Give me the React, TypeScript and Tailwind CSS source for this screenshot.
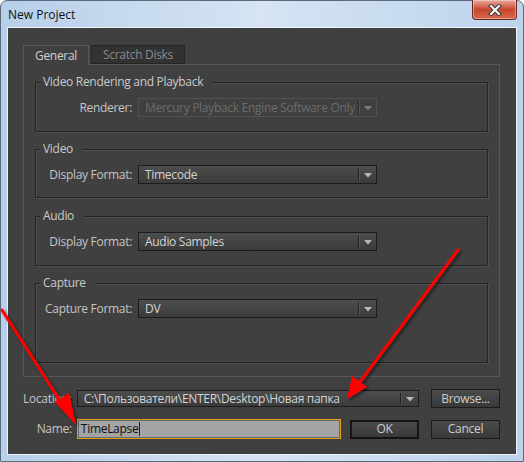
import React from "react";

function Arrow() {
  return (
    <svg width="10" height="6" viewBox="0 0 10 6">
      <path d="M1 1h8L5 5.5z" fill="#b8b8b8" />
    </svg>
  );
}

function Dropdown({ text, disabled }: { text: string; disabled?: boolean }) {
  if (disabled) {
    return (
      <div className="flex h-[19px] w-[239px] border border-[#515151] bg-[#404040]">
        <div className="flex-1 truncate pl-[6px] text-[12px] leading-[17px] text-[#6c6c6c]">{text}</div>
        <div className="my-[2px] w-px bg-[#2c2c2c]" />
        <div className="my-[2px] w-px bg-[#565656]" />
        <div className="flex w-[16px] items-center justify-center opacity-50">
          <Arrow />
        </div>
      </div>
    );
  }
  return (
    <div className="flex h-[19px] w-[239px] border border-[#1c1c1c] bg-gradient-to-b from-[#4d4d4d] to-[#3b3b3b]">
      <div className="flex-1 truncate pl-[6px] text-[12px] leading-[17px] text-[#d4d4d4]">{text}</div>
      <div className="my-[2px] w-px bg-[#222]" />
      <div className="my-[2px] w-px bg-[#555]" />
      <div className="flex w-[16px] items-center justify-center">
        <Arrow />
      </div>
    </div>
  );
}

function Group({
  title,
  label,
  value,
  disabled,
  className,
}: {
  title: string;
  label: string;
  value: string;
  disabled?: boolean;
  className: string;
}) {
  return (
    <div className={`flex flex-col border border-[#242424] shadow-[1px_1px_0_#4f4f4f,inset_1px_1px_0_#4f4f4f] ${className}`}>
      <div className="-mt-[9px] ml-[4px] w-fit bg-[#404040] pl-[3px] pr-[9px] text-[12px] leading-[16px] text-[#cacaca]">
        {title}
      </div>
      <div className="mt-[8px] flex items-center">
        <div className="w-[96px] text-right text-[12px] leading-[19px] text-[#c4c4c4]">{label}</div>
        <div className="ml-[6px]">
          <Dropdown text={value} disabled={disabled} />
        </div>
      </div>
    </div>
  );
}

function Button({ text, primary }: { text: string; primary?: boolean }) {
  return (
    <div
      className={`flex h-[19px] w-[69px] items-center justify-center bg-gradient-to-b from-[#4b4b4b] to-[#393939] text-[12px] text-[#cdcdcd] ${
        primary ? "border-2 border-[#141414]" : "border border-[#1c1c1c]"
      }`}
    >
      {text}
    </div>
  );
}

export default function App() {
  return (
    <div className="relative h-[462px] w-[524px] overflow-hidden bg-white tracking-[-0.3px] [font-family:'Open_Sans',sans-serif]">
      <div className="flex h-[462px] w-[524px] flex-col rounded-t-[7px] border border-[#5b6b7d] bg-gradient-to-r from-[#b7cfea] via-[#d6e4f3] to-[#bcd3ed] px-[6px] pb-[6px]">
        {/* title bar */}
        <div className="relative flex h-[27px] items-center">
          <div className="pl-[1px] pt-[2px] text-[12px] tracking-normal text-[#111]">New Project</div>
          <div className="absolute right-[0px] top-[-1px] flex h-[20px] w-[45px] items-center justify-center rounded-b-[4px] border border-t-0 border-[#6e2c23] bg-gradient-to-b from-[#e9a79b] via-[#c9452d] to-[#d66a4f] shadow-[inset_0_0_0_1px_rgba(255,255,255,0.35)]">
            <svg width="14" height="12" viewBox="0 0 14 12">
              <path d="M3 2l8 8M11 2l-8 8" stroke="#3a3a3a" strokeWidth="4" strokeLinecap="square" />
              <path d="M3 2l8 8M11 2l-8 8" stroke="#ffffff" strokeWidth="2" strokeLinecap="square" />
            </svg>
          </div>
        </div>
        {/* content */}
        <div className="flex flex-1 flex-col border border-[#eef3f9] bg-[#404040] pl-[15px] pr-[16px] pt-[17px] pb-[15px]">
          {/* tabs */}
          <div className="flex h-[19px] gap-[2px]">
            <div className="relative z-10 flex h-[20px] w-[66px] items-center justify-center border border-b-0 border-[#565656] bg-[#404040] text-[12px] text-[#d0d0d0]">
              General
            </div>
            <div className="flex h-[19px] w-[94px] items-center justify-center border border-[#242424] bg-[#323232] text-[12px] text-[#8a8a8a]">
              Scratch Disks
            </div>
          </div>
          <div className="flex h-[313px] flex-col border border-[#565656] px-[11px] pt-[17px]">
            <Group className="h-[50px]" title="Video Rendering and Playback" label="Renderer:" value="Mercury Playback Engine Software Only" disabled />
            <Group className="mt-[17px] h-[49px]" title="Video" label="Display Format:" value="Timecode" />
            <Group className="mt-[18px] h-[50px]" title="Audio" label="Display Format:" value="Audio Samples" />
            <Group className="mt-[17px] h-[80px]" title="Capture" label="Capture Format:" value="DV" />
          </div>
          {/* bottom */}
          <div className="mt-[12px] flex items-center">
            <div className="w-[54px] text-[12px] text-[#c4c4c4]">Location:</div>
            <div className="flex h-[17px] w-[343px] border border-[#1c1c1c] bg-gradient-to-b from-[#4d4d4d] to-[#3b3b3b]">
              <div className="flex-1 truncate pl-[6px] text-[12px] leading-[15px] text-[#d4d4d4]">
                C:\Пользователи\ENTER\Desktop\Новая папка
              </div>
              <div className="my-[2px] w-px bg-[#222]" />
              <div className="my-[2px] w-px bg-[#555]" />
              <div className="flex w-[16px] items-center justify-center">
                <Arrow />
              </div>
            </div>
            <div className="ml-[12px]">
              <Button text="Browse..." />
            </div>
          </div>
          <div className="mt-[11px] flex items-center">
            <div className="w-[54px] pr-[5px] text-right text-[12px] text-[#c4c4c4]">Name:</div>
            <div className="flex h-[20px] w-[265px] items-center border border-[#e0a018] bg-[#a4a4a4] pl-[3px] text-[12px] text-[#111] shadow-[inset_0_0_0_1px_#6a6a6a]">
              <span>TimeLapse</span>
              <span className="ml-[1px] h-[14px] w-px bg-[#222]" />
            </div>
            <div className="ml-[9px]">
              <Button text="OK" primary />
            </div>
            <div className="ml-[12px]">
              <Button text="Cancel" />
            </div>
          </div>
        </div>
      </div>
      {/* red annotation arrows */}
      <svg className="pointer-events-none absolute left-0 top-0" width="524" height="462" viewBox="0 0 524 462">
        <defs>
          <filter id="sh" x="-20%" y="-20%" width="140%" height="140%">
            <feDropShadow dx="2" dy="2" stdDeviation="1.5" floodColor="#000" floodOpacity="0.5" />
          </filter>
        </defs>
        <g filter="url(#sh)" fill="#ff0000" stroke="#ff0000">
          <line x1="2" y1="310" x2="62" y2="404" strokeWidth="3" strokeLinecap="round" />
          <path d="M76 425 L55 402 L69 393 Z" stroke="none" />
          <line x1="458" y1="250" x2="360" y2="382" strokeWidth="3" strokeLinecap="round" />
          <path d="M347 399 L352 376 L367 387 Z" stroke="none" />
        </g>
      </svg>
    </div>
  );
}
